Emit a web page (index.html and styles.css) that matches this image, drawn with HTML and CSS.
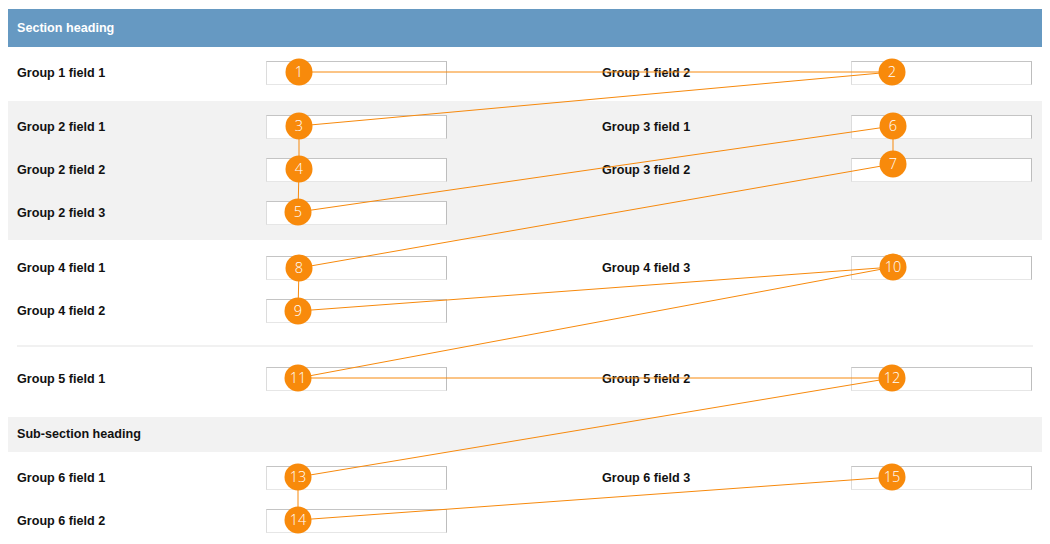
FILE: index.html
```
<!DOCTYPE html>
<html>
<head>
  <title>Form layout</title>
  <link rel="stylesheet" href="styles.css">
</head>
<body>
  <div class="form">
    <div class="section-heading">Section heading</div>

    <div class="group">
      <div class="col">
        <div class="field"><label>Group 1 field 1</label><input type="text"></div>
      </div>
      <div class="col">
        <div class="field"><label>Group 1 field 2</label><input type="text"></div>
      </div>
    </div>

    <div class="group shaded">
      <div class="col">
        <div class="field"><label>Group 2 field 1</label><input type="text"></div>
        <div class="field"><label>Group 2 field 2</label><input type="text"></div>
        <div class="field"><label>Group 2 field 3</label><input type="text"></div>
      </div>
      <div class="col">
        <div class="field"><label>Group 3 field 1</label><input type="text"></div>
        <div class="field"><label>Group 3 field 2</label><input type="text"></div>
      </div>
    </div>

    <div class="group group-4">
      <div class="col">
        <div class="field"><label>Group 4 field 1</label><input type="text"></div>
        <div class="field"><label>Group 4 field 2</label><input type="text"></div>
      </div>
      <div class="col">
        <div class="field"><label>Group 4 field 3</label><input type="text"></div>
      </div>
    </div>

    <hr class="divider">

    <div class="group group-5">
      <div class="col">
        <div class="field"><label>Group 5 field 1</label><input type="text"></div>
      </div>
      <div class="col">
        <div class="field"><label>Group 5 field 2</label><input type="text"></div>
      </div>
    </div>

    <div class="sub-heading">Sub-section heading</div>

    <div class="group">
      <div class="col">
        <div class="field"><label>Group 6 field 1</label><input type="text"></div>
        <div class="field"><label>Group 6 field 2</label><input type="text"></div>
      </div>
      <div class="col">
        <div class="field"><label>Group 6 field 3</label><input type="text"></div>
      </div>
    </div>
  </div>

  <!-- tab order overlay -->
  <svg class="tab-order" width="1050" height="544" viewBox="0 0 1050 544">
    <polyline class="tab-path" points="299,72 892,72 299,126 299,169 298,212 893,126 893,164 299,268 298,311 893,267 298,378 892,378 298,477 298,520 892,477"/>
    <g class="badge"><circle cx="299" cy="72" r="13.5"/><text x="299" y="77">1</text></g>
    <g class="badge"><circle cx="892" cy="72" r="13.5"/><text x="892" y="77">2</text></g>
    <g class="badge"><circle cx="299" cy="126" r="13.5"/><text x="299" y="131">3</text></g>
    <g class="badge"><circle cx="299" cy="169" r="13.5"/><text x="299" y="174">4</text></g>
    <g class="badge"><circle cx="298" cy="212" r="13.5"/><text x="298" y="217">5</text></g>
    <g class="badge"><circle cx="893" cy="126" r="13.5"/><text x="893" y="131">6</text></g>
    <g class="badge"><circle cx="893" cy="164" r="13.5"/><text x="893" y="169">7</text></g>
    <g class="badge"><circle cx="299" cy="268" r="13.5"/><text x="299" y="273">8</text></g>
    <g class="badge"><circle cx="298" cy="311" r="13.5"/><text x="298" y="316">9</text></g>
    <g class="badge"><circle cx="893" cy="267" r="13.5"/><text x="893" y="272">10</text></g>
    <g class="badge"><circle cx="298" cy="378" r="13.5"/><text x="298" y="383">11</text></g>
    <g class="badge"><circle cx="892" cy="378" r="13.5"/><text x="892" y="383">12</text></g>
    <g class="badge"><circle cx="298" cy="477" r="13.5"/><text x="298" y="482">13</text></g>
    <g class="badge"><circle cx="298" cy="520" r="13.5"/><text x="298" y="525">14</text></g>
    <g class="badge"><circle cx="892" cy="477" r="13.5"/><text x="892" y="482">15</text></g>
  </svg>
</body>
</html>
```

FILE: styles.css
```
body {
  margin: 9px 8px 0;
  font-family: "Liberation Sans", Arial, sans-serif;
  font-size: 12.6px;
  color: #111;
  background: #fff;
}

.form {
  width: 1034px;
}

.section-heading {
  height: 38px;
  line-height: 39px;
  padding-left: 9px;
  background-color: #6699c2;
  color: #fff;
  font-weight: bold;
}

.sub-heading {
  height: 35px;
  line-height: 35px;
  padding-left: 9px;
  background-color: #f2f2f2;
  font-weight: bold;
}

.group {
  display: grid;
  grid-template-columns: 585px 1fr;
  padding: 4px 9px 7px;
}

.group.shaded {
  background-color: #f2f2f2;
  padding-bottom: 6px;
}

.group-4 {
  padding-top: 6px;
  padding-bottom: 13px;
}

.group-5 {
  padding-top: 10px;
  padding-bottom: 17px;
}

.divider {
  margin: 0 9px;
  height: 2px;
  border: none;
  background-color: #f1f1f1;
}

.col {
  display: flex;
  flex-direction: column;
}

.field {
  display: flex;
  align-items: center;
  height: 43px;
}

.field label {
  width: 249px;
  font-weight: bold;
}

.field input[type="text"] {
  box-sizing: border-box;
  width: 181px;
  height: 24px;
  margin: 0;
  padding: 2px 4px;
  border: 1px solid;
  border-color: #c4c4c4 #bdbdbd #e6e6e6 #dcdcdc;
  background: #fff;
}

.tab-order {
  position: absolute;
  left: 0;
  top: 0;
  pointer-events: none;
}

.tab-path {
  fill: none;
  stroke: #f7890c;
  stroke-width: 1;
}

.badge circle {
  fill: #f88a0b;
}

.badge text {
  fill: #fff;
  font-family: "Open Sans", sans-serif;
  font-weight: 300;
  font-size: 14.5px;
  text-anchor: middle;
}
```
